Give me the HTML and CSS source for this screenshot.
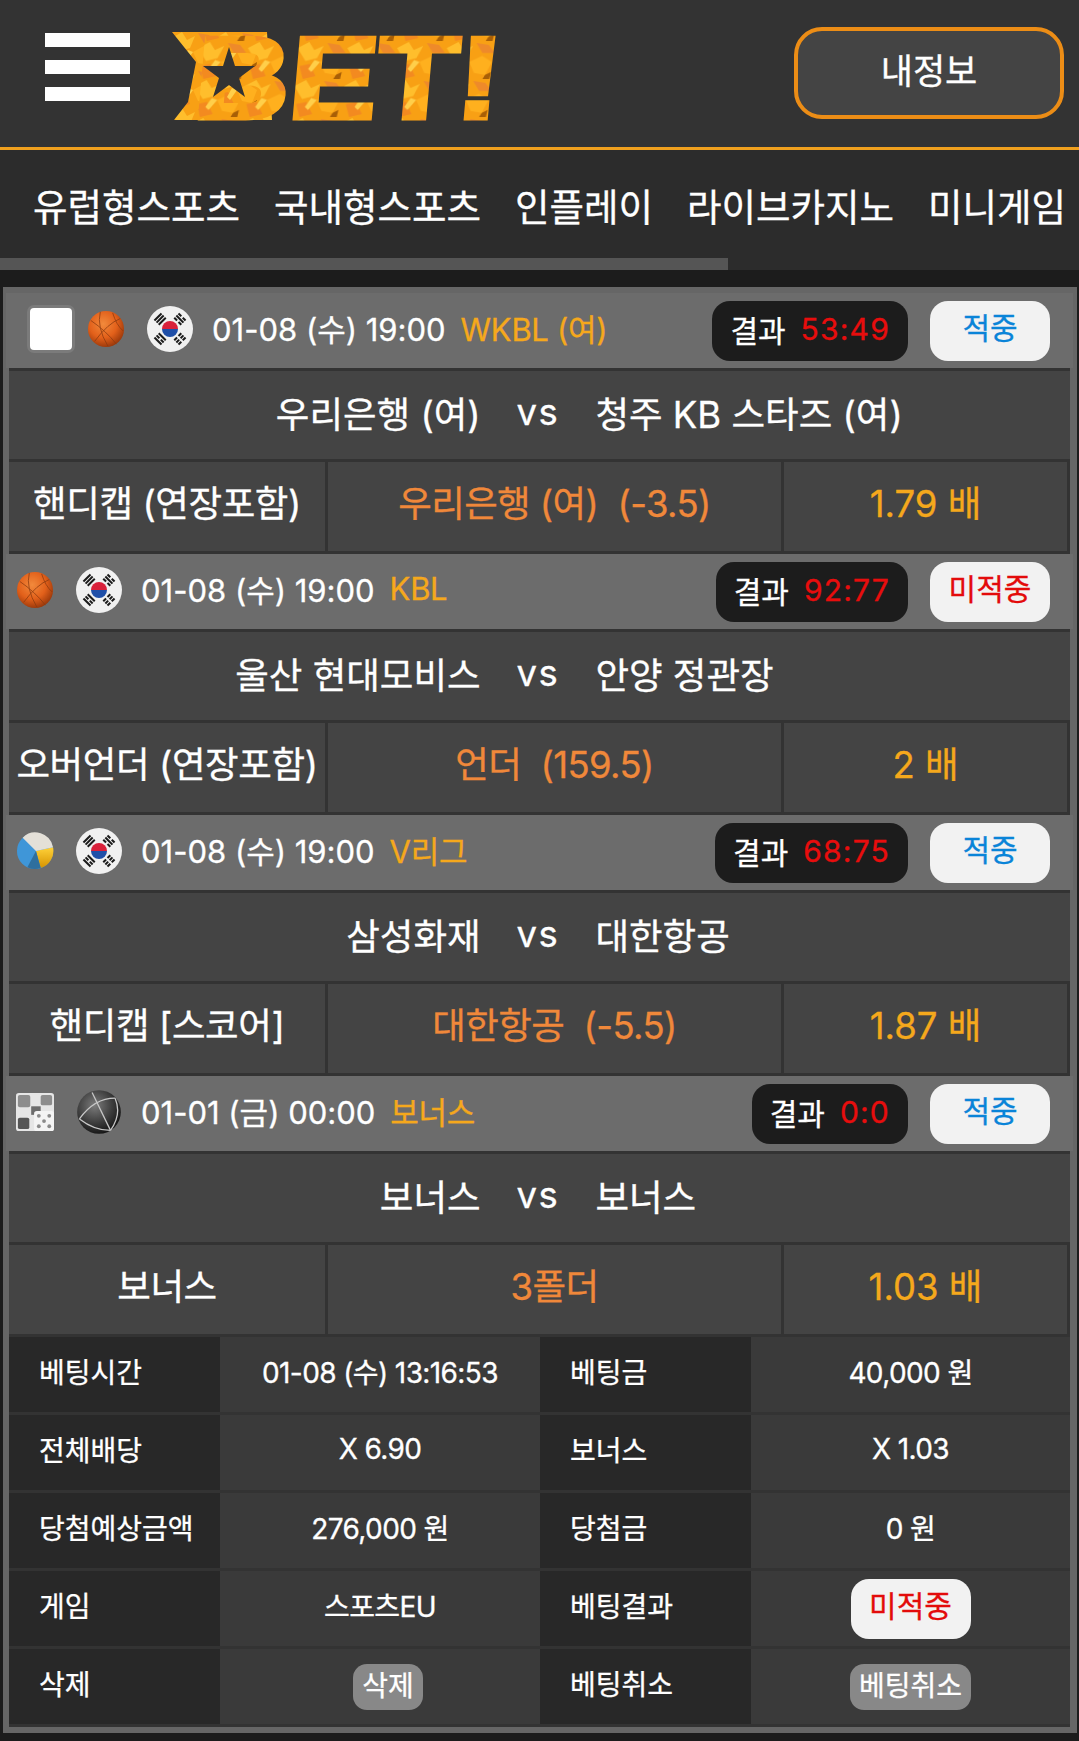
FILE: index.html
```html
<!DOCTYPE html>
<html lang="ko">
<head>
    <meta charset="UTF-8">
    <meta name="viewport" content="width=device-width, initial-scale=1.0">
    <title>BET! 베팅내역</title>
    <link rel="stylesheet" href="styles.css">
</head>
<body>
    <!-- shared icons -->
    <svg class="icon-defs" width="0" height="0" aria-hidden="true">
        <defs>
            <radialGradient id="ball-fill" cx="42%" cy="36%" r="70%">
                <stop offset="0" stop-color="#f28a3c"/>
                <stop offset="0.55" stop-color="#e2601a"/>
                <stop offset="1" stop-color="#8f3208"/>
            </radialGradient>
            <radialGradient id="globe-fill" cx="40%" cy="35%" r="70%">
                <stop offset="0" stop-color="#7c7c7c"/>
                <stop offset="0.6" stop-color="#3a3a3a"/>
                <stop offset="1" stop-color="#111"/>
            </radialGradient>
            <linearGradient id="vb-yellow" x1="0" y1="0" x2="0" y2="1">
                <stop offset="0" stop-color="#ffd23a"/>
                <stop offset="1" stop-color="#d69300"/>
            </linearGradient>
            <pattern id="leaves" width="44" height="38" patternUnits="userSpaceOnUse">
                <rect width="44" height="38" fill="#f8a014"/>
                <polygon points="0,6 10,0 15,8 23,4 18,16 8,19" fill="#ffbe2c"/>
                <polygon points="21,20 32,14 41,20 36,33 26,31" fill="#ffb01e"/>
                <polygon points="3,24 12,22 18,34 7,37" fill="#f38a20"/>
                <polygon points="26,1 37,3 43,11 32,11" fill="#ee8a2a"/>
                <polygon points="16,18 21,20 14,30 11,27" fill="#ffcf4a"/>
                <polygon points="36,33 41,30 40,37 34,37" fill="#a85f06"/>
            </pattern>
            <symbol id="ic-basket" viewBox="0 0 40 40">
                <circle cx="20" cy="20" r="19" fill="url(#ball-fill)"/>
                <g fill="none" stroke="#8a3a10" stroke-width="1" opacity="0.8">
                    <path d="M4 11 Q20 22 31 36"/>
                    <path d="M14 2 Q10 18 22 38"/>
                    <path d="M35 9 Q22 14 8 33"/>
                    <path d="M27 3 Q31 16 38 22"/>
                </g>
            </symbol>
            <symbol id="ic-volley" viewBox="0 0 40 40">
                <circle cx="20" cy="20" r="19" fill="#3f96d8"/>
                <path d="M21 20 L39 16 A19 19 0 0 1 26 38 Z" fill="url(#vb-yellow)"/>
                <path d="M21 20 L39 16 A19 19 0 0 0 7 6 Z" fill="#e4e0d8"/>
                <path d="M21 20 L26 38 A19 19 0 0 1 12 37 Z" fill="#2f6f9e"/>
            </symbol>
            <symbol id="ic-bonus" viewBox="0 0 40 40">
                <rect x="0" y="0" width="40" height="40" rx="3" fill="#e6e6e6"/>
                <rect x="2" y="2" width="13" height="13" rx="2" fill="#8d8d8d"/>
                <rect x="26" y="2" width="12" height="11" rx="2" fill="#8d8d8d"/>
                <rect x="2" y="26" width="12" height="12" rx="2" fill="#555"/>
                <rect x="16" y="14" width="10" height="9" fill="#6c6c6c"/>
                <rect x="19" y="19" width="21" height="21" rx="3" fill="#f4f4f4"/>
                <g fill="#8a8a8a">
                    <circle cx="24" cy="24" r="2"/><circle cx="35" cy="24" r="2"/>
                    <circle cx="29.5" cy="29.5" r="2"/>
                    <circle cx="24" cy="35" r="2"/><circle cx="35" cy="35" r="2"/>
                </g>
            </symbol>
            <symbol id="ic-globe" viewBox="0 0 40 40">
                <circle cx="20" cy="20" r="19" fill="url(#globe-fill)"/>
                <g fill="none" stroke="#c8c8c8" stroke-width="1.1">
                    <path d="M3 26 Q16 8 34 8"/>
                    <path d="M14 3 L30 36"/>
                    <path d="M3 26 Q16 36 30 36"/>
                    <path d="M34 8 Q40 22 30 36"/>
                </g>
            </symbol>
            <symbol id="ic-kr" viewBox="0 0 46 46">
                <circle cx="23" cy="23" r="23" fill="#f1f1f1"/>
                <path d="M15 23 a8 8 0 0 1 16 0 Z" fill="#d9203a"/>
                <path d="M15 23 a8 8 0 0 0 16 0 Z" fill="#1f4fa8"/>
                <g fill="#1b1b1b">
                    <g transform="rotate(-45 23 23)">
                        <rect x="18" y="5" width="10" height="2"/>
                        <rect x="18" y="8" width="10" height="2"/>
                        <rect x="18" y="11" width="10" height="2"/>
                        <rect x="18" y="33" width="4" height="2"/><rect x="24" y="33" width="4" height="2"/>
                        <rect x="18" y="36" width="4" height="2"/><rect x="24" y="36" width="4" height="2"/>
                        <rect x="18" y="39" width="4" height="2"/><rect x="24" y="39" width="4" height="2"/>
                    </g>
                    <g transform="rotate(45 23 23)">
                        <rect x="18" y="5" width="4" height="2"/><rect x="24" y="5" width="4" height="2"/>
                        <rect x="18" y="8" width="10" height="2"/>
                        <rect x="18" y="11" width="4" height="2"/><rect x="24" y="11" width="4" height="2"/>
                        <rect x="18" y="33" width="10" height="2"/>
                        <rect x="18" y="36" width="4" height="2"/><rect x="24" y="36" width="4" height="2"/>
                        <rect x="18" y="39" width="10" height="2"/>
                    </g>
                </g>
            </symbol>
        </defs>
    </svg>

    <header class="top">
        <div class="burger"><span></span><span></span><span></span></div>
        <svg class="logo" width="330" height="137" viewBox="0 -23 330 137" role="img" aria-label="BET!">
            <polygon points="0,0 95,0 100,88 2,88 16,70 24,30" fill="url(#leaves)"/>
            <text class="logo-text" transform="translate(20 86) skewX(-5) scale(1.13 1)" fill="url(#leaves)" stroke="url(#leaves)" stroke-width="5">BET!</text>
            <polygon points="57,15 63,34 83,34 67,46 73,65 57,53 41,65 47,46 31,34 51,34" fill="#333"/>
        </svg>
        <a class="my-info">내정보</a>
    </header>

    <nav class="menu">
        <ul class="menu-list">
            <li>유럽형스포츠</li>
            <li>국내형스포츠</li>
            <li>인플레이</li>
            <li>라이브카지노</li>
            <li>미니게임</li>
        </ul>
        <div class="menu-thumb"></div>
    </nav>

    <main class="bet-box">
        <section class="game">
            <div class="game-head">
                <div class="game-info">
                    <span class="check"></span>
                    <svg class="ball"><use href="#ic-basket"/></svg>
                    <svg class="flag"><use href="#ic-kr"/></svg>
                    <span class="date">01-08 (수) 19:00</span>
                    <span class="league">WKBL (여)</span>
                </div>
                <div class="score">결과 <b>53:49</b></div>
                <div class="status hit">적중</div>
            </div>
            <div class="teams"><span class="home">우리은행 (여)</span><span class="vs">vs</span><span class="away">청주 KB 스타즈 (여)</span></div>
            <div class="pick"><div class="pick-type">핸디캡 (연장포함)</div><div class="pick-name">우리은행 (여) &nbsp;(-3.5)</div><div class="odds">1.79 배</div></div>
        </section>

        <section class="game">
            <div class="game-head">
                <div class="game-info">
                    <svg class="ball"><use href="#ic-basket"/></svg>
                    <svg class="flag"><use href="#ic-kr"/></svg>
                    <span class="date">01-08 (수) 19:00</span>
                    <span class="league">KBL</span>
                </div>
                <div class="score">결과 <b>92:77</b></div>
                <div class="status miss">미적중</div>
            </div>
            <div class="teams"><span class="home">울산 현대모비스</span><span class="vs">vs</span><span class="away">안양 정관장</span></div>
            <div class="pick"><div class="pick-type">오버언더 (연장포함)</div><div class="pick-name">언더 &nbsp;(159.5)</div><div class="odds">2 배</div></div>
        </section>

        <section class="game">
            <div class="game-head">
                <div class="game-info">
                    <svg class="ball"><use href="#ic-volley"/></svg>
                    <svg class="flag"><use href="#ic-kr"/></svg>
                    <span class="date">01-08 (수) 19:00</span>
                    <span class="league">V리그</span>
                </div>
                <div class="score">결과 <b>68:75</b></div>
                <div class="status hit">적중</div>
            </div>
            <div class="teams"><span class="home">삼성화재</span><span class="vs">vs</span><span class="away">대한항공</span></div>
            <div class="pick"><div class="pick-type">핸디캡 [스코어]</div><div class="pick-name">대한항공 &nbsp;(-5.5)</div><div class="odds">1.87 배</div></div>
        </section>

        <section class="game">
            <div class="game-head">
                <div class="game-info">
                    <svg class="ball"><use href="#ic-bonus"/></svg>
                    <svg class="flag"><use href="#ic-globe"/></svg>
                    <span class="date">01-01 (금) 00:00</span>
                    <span class="league">보너스</span>
                </div>
                <div class="score">결과 <b>0:0</b></div>
                <div class="status hit">적중</div>
            </div>
            <div class="teams"><span class="home">보너스</span><span class="vs">vs</span><span class="away">보너스</span></div>
            <div class="pick"><div class="pick-type">보너스</div><div class="pick-name">3폴더</div><div class="odds">1.03 배</div></div>
        </section>

        <div class="summary">
            <div class="label">베팅시간</div><div class="value">01-08 (수) 13:16:53</div>
            <div class="label">베팅금</div><div class="value">40,000 원</div>
            <div class="label">전체배당</div><div class="value">X 6.90</div>
            <div class="label">보너스</div><div class="value">X 1.03</div>
            <div class="label">당첨예상금액</div><div class="value">276,000 원</div>
            <div class="label">당첨금</div><div class="value">0 원</div>
            <div class="label">게임</div><div class="value">스포츠EU</div>
            <div class="label">베팅결과</div><div class="value"><span class="status miss">미적중</span></div>
            <div class="label">삭제</div><div class="value"><a class="small-btn del-btn">삭제</a></div>
            <div class="label">베팅취소</div><div class="value"><a class="small-btn">베팅취소</a></div>
        </div>
    </main>
</body>
</html>
```

FILE: styles.css
```css
* {
    box-sizing: border-box;
}

body {
    margin: 0;
    background: #1c1c1c;
    color: #fff;
    font-family: Inter, "Noto Sans CJK KR", "Noto Sans", sans-serif;
    -webkit-text-stroke: 0.3px;
}

.icon-defs {
    position: absolute;
}

/* top bar */
.top {
    display: flex;
    align-items: center;
    height: 150px;
    padding: 0 15px 0 45px;
    background: #333;
    border-bottom: 3px solid #f0a01e;
}

.burger {
    display: flex;
    flex-direction: column;
    gap: 13px;
    width: 85px;
    margin-top: -14px;
}

.burger span {
    display: block;
    height: 14px;
    background: #fff;
}

.logo {
    margin: 8px 0 0 42px;
}

.logo-text {
    font-family: "Liberation Sans", sans-serif;
    font-size: 116px;
    font-weight: bold;
    -webkit-text-stroke: 0;
}

.my-info {
    display: flex;
    align-items: center;
    justify-content: center;
    width: 270px;
    height: 92px;
    margin: -1px 0 0 auto;
    padding-bottom: 10px;
    background: #444;
    border: 4px solid #ec8d16;
    border-radius: 28px;
    font-size: 35px;
}

/* menu */
.menu {
    height: 120px;
    background: #2c2c2c;
}

.menu-list {
    display: flex;
    gap: 34px;
    height: 108px;
    margin: 0;
    padding: 0 0 0 33px;
    align-items: center;
    list-style: none;
    font-size: 37.5px;
    white-space: nowrap;
}

.menu-thumb {
    width: 728px;
    height: 12px;
    background: #555;
}

/* bet list */
.bet-box {
    margin: 17px 2px 0 3px;
    padding: 6px 7px 6px 6px;
    background: #666;
}

.game-head {
    display: flex;
    align-items: center;
    height: 75px;
    margin: 0 -3px;
    padding: 0 23px 3px 10px;
    background: #6c6c6c;
}

.game:first-child .game-head {
    padding-left: 21px;
}

.game-info {
    display: flex;
    align-items: center;
    flex: 1;
    font-size: 31px;
    white-space: nowrap;
}

.check {
    width: 48px;
    height: 48px;
    margin-right: 12px;
    background: #fff;
    border: 3px solid #7b7b7b;
    border-radius: 7px;
}

.ball {
    width: 38px;
    height: 38px;
    margin-right: 22px;
    filter: blur(0.4px);
}

.flag {
    width: 46px;
    height: 46px;
    margin-right: 19px;
    filter: blur(0.3px);
}

.date,
.league {
    padding-bottom: 4px;
}

.league {
    margin-left: 15px;
    color: #f5a81c;
    letter-spacing: -0.3px;
}

.score {
    display: flex;
    align-items: center;
    gap: 15px;
    height: 60px;
    margin-top: 3px;
    padding: 0 18px 4px;
    background: #1c1c1c;
    border-radius: 18px;
    font-size: 30px;
    white-space: nowrap;
}

.score b {
    color: #e80d0d;
    font-weight: 400;
    letter-spacing: 1.2px;
}

.status {
    display: inline-flex;
    align-items: center;
    justify-content: center;
    width: 120px;
    height: 60px;
    padding-bottom: 10px;
    background: #f2f2f2;
    border-radius: 18px;
    font-size: 30px;
}

.game-head .status {
    margin: 3px 0 0 22px;
}

.hit {
    color: #0a84d8;
}

.miss {
    color: #e30b0b;
}

.teams,
.pick {
    font-size: 36.5px;
}

.teams {
    display: grid;
    grid-template-columns: 1fr auto 1fr;
    column-gap: 36px;
    height: 91px;
    align-items: center;
    padding: 0 3px 6px 0;
    background: #444;
    border-top: 3px solid #333;
}

.home {
    text-align: right;
}

.vs {
    letter-spacing: 1.5px;
}

.pick {
    display: grid;
    grid-template-columns: 316px 453px 1fr;
    column-gap: 3px;
    height: 95px;
    padding: 3px 3px 3px 0;
    background: #333;
    text-align: center;
}

.pick > div {
    display: flex;
    align-items: center;
    justify-content: center;
    padding-bottom: 11px;
    background: #444;
    white-space: nowrap;
}

.pick .pick-type {
    letter-spacing: -0.4px;
}

.pick .pick-name {
    color: #f0883a;
    letter-spacing: -0.6px;
}

.pick .odds {
    color: #f5a81c;
}

/* totals table */
.summary {
    display: grid;
    grid-template-columns: 211px 320px 211px 1fr;
    grid-auto-rows: 75px;
    row-gap: 3px;
    padding-bottom: 3px;
    background: #333;
    font-size: 28px;
}

.label,
.value {
    display: flex;
    align-items: center;
    padding-bottom: 7px;
    white-space: nowrap;
}

.label {
    padding-left: 30px;
    background: #282828;
}

.value {
    justify-content: center;
    background: #3a3a3a;
    letter-spacing: -0.6px;
}

.value .status,
.value .small-btn {
    margin-top: 7px;
    letter-spacing: 0;
}

.small-btn {
    display: flex;
    align-items: center;
    height: 46px;
    padding: 0 9px 5px;
    background: #888;
    border-radius: 14px;
}

.del-btn {
    margin-left: 16px;
}
```
